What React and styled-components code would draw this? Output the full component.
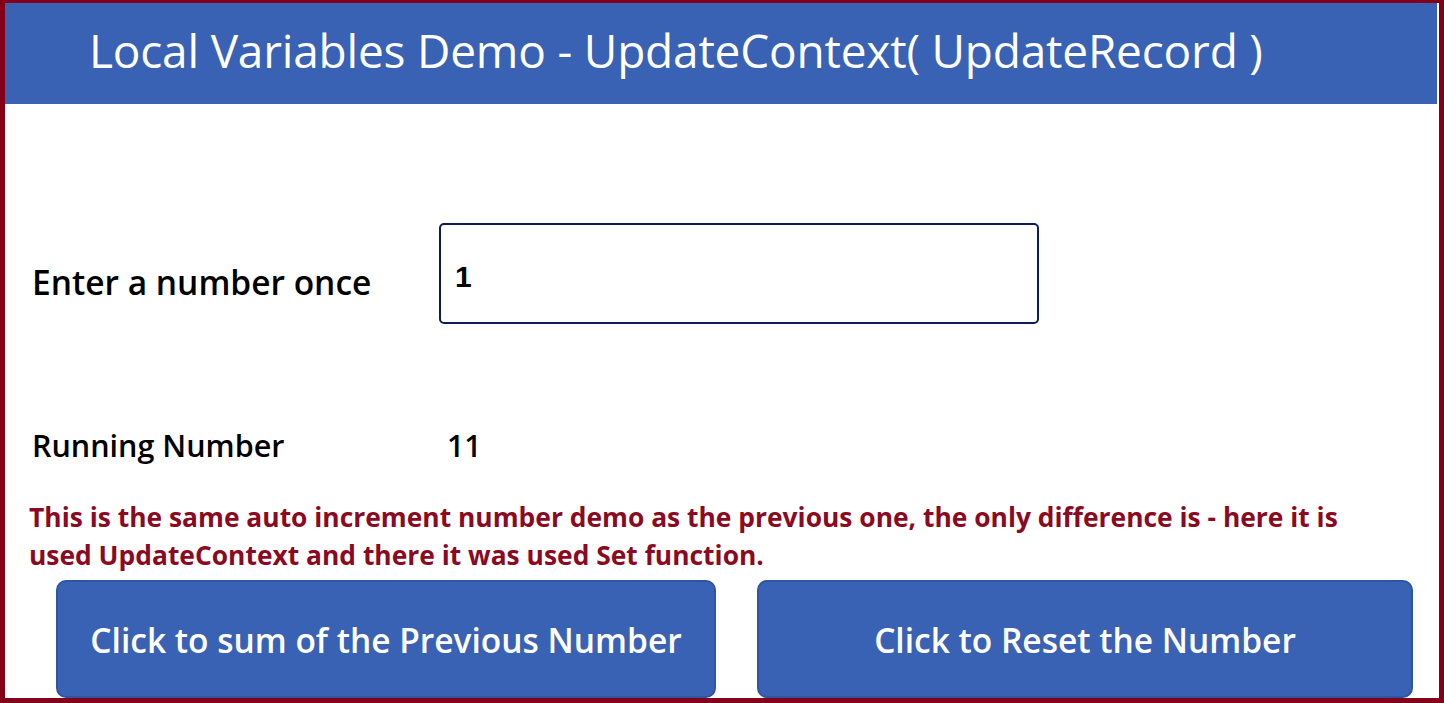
import React, { useState } from 'react';
import styled, { createGlobalStyle } from 'styled-components';

const GlobalStyle = createGlobalStyle`
  html, body {
    margin: 0;
    padding: 0;
    background: #ffffff;
  }
  * {
    box-sizing: border-box;
  }
`;

const Screen = styled.div`
  width: 1444px;
  height: 703px;
  overflow: hidden;
  border-style: solid;
  border-color: #820018;
  border-width: 3px 5px 5px 5px;
  padding-right: 2px;
  display: flex;
  flex-direction: column;
  font-family: "Open Sans", "Noto Sans", sans-serif;
  background: #ffffff;
`;

const TitleBar = styled.header`
  height: 101px;
  flex-shrink: 0;
  background: #3a62b4;
  color: #ffffff;
  display: flex;
  align-items: center;
  padding-left: 84px;
  padding-bottom: 8px;
`;

const Title = styled.h1`
  margin: 0;
  font-size: 46px;
  font-weight: 400;
  letter-spacing: -0.2px;
`;

const Content = styled.main`
  flex: 1;
  display: flex;
  flex-direction: column;
  padding: 0 0 0 24px;
`;

const FieldRow = styled.div`
  display: flex;
  align-items: center;
  margin-top: ${(p) => p.$top}px;
  height: ${(p) => p.$height}px;
`;

const Label = styled.div`
  width: ${(p) => p.$width}px;
  padding-left: 3px;
  padding-top: ${(p) => p.$drop || 0}px;
  font-size: ${(p) => p.$size}px;
  font-weight: 600;
  color: #000000;
  white-space: nowrap;
`;

const NumberInput = styled.input`
  width: 600px;
  height: 101px;
  border: 2px solid #0f1c5c;
  border-radius: 5px;
  padding: 6px 0 0 14px;
  font-family: "Liberation Sans", Arial, sans-serif;
  font-size: 30px;
  font-weight: 600;
  color: #000000;
  outline: none;
  background: #ffffff;
`;

const Value = styled.div`
  padding-left: 8px;
  font-size: 30px;
  font-weight: 600;
  color: #000000;
`;

const Note = styled.p`
  margin: 26px 0 0;
  font-size: 26.4px;
  font-weight: 700;
  line-height: 38px;
  color: #8a0a22;
  white-space: nowrap;
`;

const ButtonRow = styled.div`
  display: flex;
  gap: 41px;
  margin-top: 6px;
  padding-left: 27px;
`;

const ActionButton = styled.button`
  width: ${(p) => p.$width}px;
  height: 118px;
  flex-shrink: 0;
  background: #3a62b4;
  border: 2px solid #2f54a3;
  border-radius: 10px;
  color: #ffffff;
  font-family: "Open Sans", "Noto Sans", sans-serif;
  font-size: 33.5px;
  font-weight: 600;
  padding: 2px 0 0;
  cursor: pointer;
`;

export default function App() {
  const [entry, setEntry] = useState('1');
  const [running, setRunning] = useState(11);

  return (
    <>
      <GlobalStyle />
      <Screen>
        <TitleBar>
          <Title>Local Variables Demo - UpdateContext( UpdateRecord )</Title>
        </TitleBar>
        <Content>
          <FieldRow $top={119} $height={101}>
            <Label $width={410} $size={33.5} $drop={16}>Enter a number once</Label>
            <NumberInput value={entry} onChange={(e) => setEntry(e.target.value)} />
          </FieldRow>
          <FieldRow $top={94} $height={54}>
            <Label $width={410} $size={30.5}>Running Number</Label>
            <Value>{running}</Value>
          </FieldRow>
          <Note>
            This is the same auto increment number demo as the previous one, the only difference is - here it is
            <br />
            used UpdateContext and there it was used Set function.
          </Note>
          <ButtonRow>
            <ActionButton $width={660} onClick={() => setRunning(running + Number(entry || 0))}>
              Click to sum of the Previous Number
            </ActionButton>
            <ActionButton $width={656} onClick={() => setRunning(0)}>
              Click to Reset the Number
            </ActionButton>
          </ButtonRow>
        </Content>
      </Screen>
    </>
  );
}
